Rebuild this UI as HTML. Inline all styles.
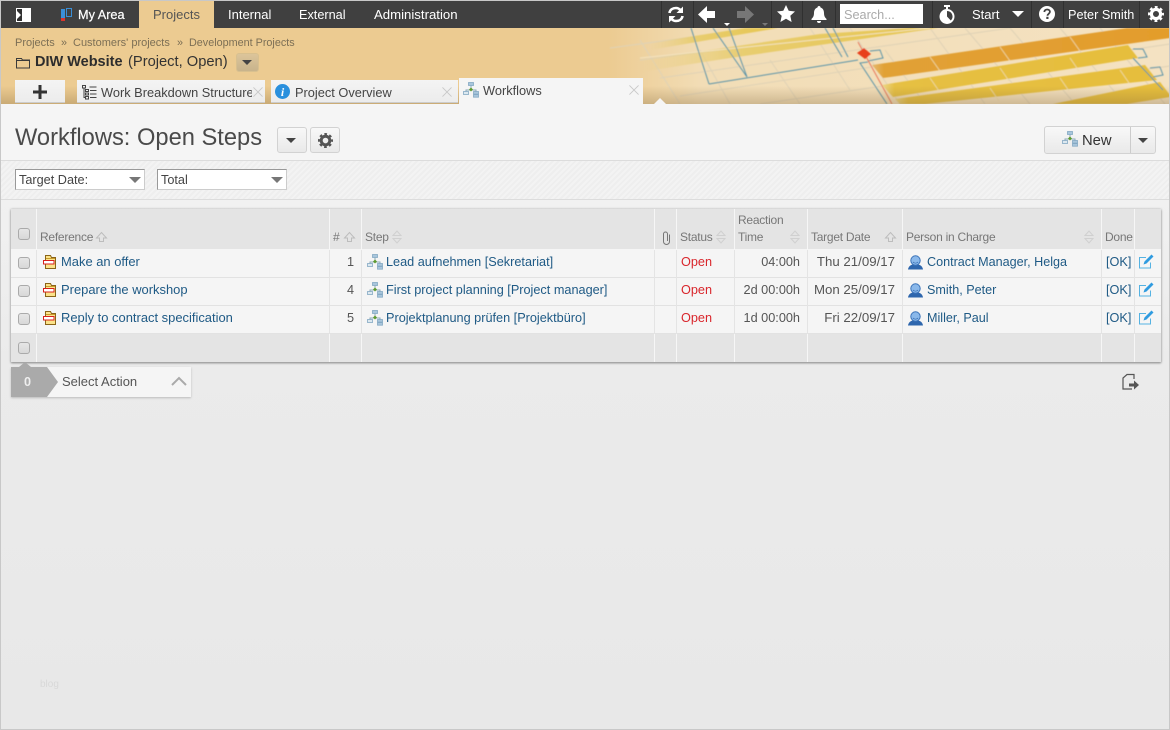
<!DOCTYPE html>
<html><head><meta charset="utf-8"><title>Workflows: Open Steps</title>
<style>
*{box-sizing:border-box}
html,body{margin:0;padding:0}
body{width:1170px;height:730px;position:relative;overflow:hidden;background:#e8e8e8;font-family:"Liberation Sans",sans-serif;font-size:12.7px;color:#555}
.a{position:absolute}
.t{position:absolute;white-space:nowrap;line-height:16px}
.nav{color:#fff;top:7px;font-size:13px}
.l{color:#1f5a85}
.rf{font-size:12.95px}.st{font-size:12.7px}.pc{font-size:12.6px}.dt{font-size:13.25px}
.r{text-align:right}
.h{color:#777;font-size:12px;letter-spacing:-.25px}
.bc{font-size:10.8px;color:#7c6f55;top:35px}
.sep{position:absolute;width:1px;top:1px;height:27px;background:#303030}
.cs{position:absolute;width:1px;top:209px;height:153px;background:linear-gradient(#f6f6f6 0 41px,#e4e4e4 41px 125px,#f6f6f6 125px 153px)}
.cb{position:absolute;left:18px;width:12px;height:12px;border:1px solid #aaa;border-radius:3px;background:linear-gradient(#e6e6e6,#d8d8d8)}
.rl{position:absolute;left:11px;width:1150px;height:1px;background:#e2e2e2}
.tab{position:absolute;top:80px;height:23px;background:linear-gradient(#f4f4f4,#ececec);border-bottom:1px solid #ccc}
.btn{position:absolute;border:1px solid #d2d2d2;border-radius:3px;background:linear-gradient(#f8f8f8,#e9e9e9)}
.sel{position:absolute;top:169px;height:21px;background:#fff;border:1px solid #ccc;border-top-color:#999;border-left-color:#999;color:#444;padding-left:3px;line-height:20px;font-size:12.7px}
.tri{position:absolute;width:0;height:0;border-left:6px solid transparent;border-right:6px solid transparent;border-top:6px solid #444}
svg.i{position:absolute;overflow:visible}
</style></head><body>

<svg width="0" height="0" style="position:absolute"><defs>
<symbol id="wf" viewBox="0 0 16 16" overflow="visible">
<path d="M8 3v4M3 10V8h10v2" fill="none" stroke="#8aa9b8" stroke-width="1"/>
<rect x="5.500" y=".5" width="5" height="3" fill="#a9c6dc" stroke="#84a9c4" stroke-width=".8"/>
<rect x=".5" y="9.500" width="5" height="3" fill="#dce8f0" stroke="#84a9c4" stroke-width=".8"/>
<rect x="10.500" y="9.500" width="5" height="2.600" fill="#a9c6dc" stroke="#84a9c4" stroke-width=".8"/>
<rect x="10.500" y="12.600" width="5" height="2.600" fill="#a9c6dc" stroke="#84a9c4" stroke-width=".8"/>
<path d="M8 5.500l2 2-2 2-2-2z" fill="#5d9a2e"/>
</symbol>
<symbol id="fd" viewBox="0 0 13 14" overflow="visible">
<path d="M2.500 .5h5l1 2h4v11h-10z" fill="#fbe38a" stroke="#8a6418" stroke-width="1"/>
<path d="M3 3.500h9" stroke="#c99a2a"/>
<rect x=".5" y="5.500" width="10.500" height="3.500" fill="#fff" stroke="#d8201c" stroke-width="1"/>
</symbol>
<symbol id="pr" viewBox="0 0 15 15" overflow="visible">
<path d="M0 14.500c.5-3.500 3-4.500 4.500-5h6c1.500.5 4 1.500 4.500 5z" fill="#2e66ad"/>
<circle cx="7.500" cy="5.500" r="4.700" fill="#8ab8ea" stroke="#3a72b8"/>
<path d="M5 7c1.500 1.500 3.500 1.500 5 0" stroke="#2e66ad" fill="none" stroke-width=".8"/>
</symbol>
<symbol id="ed" viewBox="0 0 15 15" overflow="visible">
<path d="M7 3.500H.5v10.500h11V8.500" fill="none" stroke="#55b2e2" stroke-width="1"/>
<path d="M4.500 10.500l1-3L12.500.5l2 2-7 7z" fill="#2f9be0"/>
</symbol>
<symbol id="gr" viewBox="0 0 16 16" overflow="visible">
<circle cx="8" cy="8" r="4.600" fill="none" stroke="currentColor" stroke-width="3.200"/>
<circle cx="8" cy="8" r="6.800" fill="none" stroke="currentColor" stroke-width="2.400" stroke-dasharray="2.800 2.540" stroke-dashoffset="1.400"/>
</symbol>
<symbol id="so" viewBox="0 0 11 10" overflow="visible"><path d="M.5 6L5.500 .5l5 5.500H7.500v3.500h-4V6z" fill="none" stroke="#bdbdbd"/></symbol>
<symbol id="sd" viewBox="0 0 10 14" overflow="visible"><path d="M1 5.500L5 1l4 4.500zM1 8.500L5 13l4-4.500z" fill="none" stroke="#d0d0d0"/></symbol>
<symbol id="xx" viewBox="0 0 11 11" overflow="visible"><path d="M.5 .5l10 10M10.500 .5l-10 10" stroke="#c8c8c8" fill="none"/></symbol>
</defs></svg>

<!-- Header art -->
<svg class="a" style="left:0;top:28px" width="1170" height="76" viewBox="0 28 1170 76">
<defs>
<linearGradient id="bg" x1="0" x2="1" y1="0" y2="0"><stop offset="0" stop-color="#eccb91"/><stop offset=".52" stop-color="#eccb91"/><stop offset=".6" stop-color="#f2ddb6"/><stop offset="1" stop-color="#f4e2c2"/></linearGradient>
<linearGradient id="y1" x1="0" x2="1" y1="0" y2="0"><stop offset="0" stop-color="#e8cd78" stop-opacity="0"/><stop offset=".35" stop-color="#e8cd70"/><stop offset="1" stop-color="#e6c64f"/></linearGradient>
<linearGradient id="o1" x1="0" x2="1" y1="0" y2="0"><stop offset="0" stop-color="#e5b870"/><stop offset=".04" stop-color="#e1a136"/><stop offset="1" stop-color="#e39d2c"/></linearGradient>
<linearGradient id="y2" x1="0" x2="1" y1="0" y2="0"><stop offset="0" stop-color="#ecd68a"/><stop offset=".05" stop-color="#e6c044"/><stop offset="1" stop-color="#e6be3c"/></linearGradient>
<linearGradient id="sh" x1="0" x2="0" y1="0" y2="1"><stop offset="0" stop-color="#7a5f35" stop-opacity="0"/><stop offset="1" stop-color="#7a5f35" stop-opacity=".3"/></linearGradient>
<filter id="bl" x="-5%" y="-5%" width="110%" height="110%"><feGaussianBlur stdDeviation=".55"/></filter>
</defs>
<rect x="0" y="28" width="1170" height="76" fill="url(#bg)"/>
<g filter="url(#bl)">
<g stroke="#dfd2b6" stroke-width="1" fill="none">
<path d="M640 60L900 28M660 78L1010 28M680 96L1130 28M760 104L1170 44M900 104L1170 66M610 48L760 28"/>
<path d="M850 28L900 104M885 50L925 104M930 28L985 104M965 28L1030 104M1010 28L1075 104M1060 28L1125 104M1100 28L1165 104M700 50L730 104M770 60L800 104M810 28L850 90M640 40L680 104"/>
</g>
<polygon points="650,43 745,28 778,28 650,50" fill="url(#y1)"/>
<polygon points="640,60 820,34 910,28 938,28 730,58 640,72" fill="url(#y1)"/>
<path d="M640 58L930 28" stroke="#f3e3c0"/>
<polygon points="872,65 1127,28 1170,28 1170,38 883,78" fill="url(#o1)"/>
<polygon points="882,85 1128,45 1138,58 893,97" fill="url(#y2)"/>
<polygon points="895,99 1145,65 1157,80 925,104 900,104" fill="url(#y2)"/>
<polygon points="1053,104 1160,82 1170,95 1170,97 1127,104" fill="#e6be3c"/>
<g stroke="#efdcab" stroke-width=".7" fill="none"><path d="M930 57l10 14M1000 47l10 14M1070 37l10 14M930 78l9 13M1000 68l9 13M1070 58l9 13M990 88l9 13M1060 78l9 13M1120 70l9 13"/></g>
<g stroke="#5a93a8" stroke-width="1" fill="none">
<path d="M691 28L709 84M713 28L747 77M729 28L747 77"/>
<path d="M709 84L858 60"/>
<path d="M825 28L842 57M833 28L848 57"/>
<path d="M870 51L880 50L883 58L868 61"/>
<path d="M868 62L860 63L887 104"/>
<path d="M1133 49L1143 49L1147 57L1138 58M1133 58L1163 90M1150 68L1160 67L1163 75L1153 77"/>
</g>
<path d="M858 42L892 104" stroke="#e8775a" stroke-width="1" fill="none"/>
<polygon points="857,53 864,48 871,54 865,59" fill="#e8401c"/>
</g>
<rect x="0" y="86" width="1170" height="18" fill="url(#sh)"/>
</svg>

<!-- Content bg -->
<div class="a" style="left:0;top:104px;width:1170px;height:57px;background:#f5f5f5"></div>
<div class="a" style="left:0;top:160px;width:1170px;height:40px;background:repeating-linear-gradient(135deg,#f3f3f3 0 2px,#eeeeee 2px 4px);border-top:1px solid #dcdcdc;border-bottom:1px solid #dcdcdc"></div>
<div class="a" style="left:0;top:200px;width:1170px;height:530px;background:linear-gradient(#f1f1f1,#ebebeb 30%,#e8e8e8)"></div>

<!-- Top nav -->
<div class="a" style="left:0;top:1px;width:1170px;height:27px;background:#404040"></div>
<div class="a" style="left:139px;top:1px;width:75px;height:27px;background:#eccb91"></div>
<div class="a" style="left:16px;top:8px;width:15px;height:14px;background:#fff;border:1px solid #fff"></div>
<div class="a" style="left:17px;top:9px;width:5px;height:12px;background:#303030"></div>
<div class="a" style="left:17px;top:11px;width:0;height:0;border-left:4px solid #fff;border-top:4px solid transparent;border-bottom:4px solid transparent"></div>
<div class="a" style="left:61px;top:9px;width:4px;height:10px;background:#3a8fd8"></div>
<div class="a" style="left:61px;top:18px;width:4px;height:3px;background:#d8352c"></div>
<div class="a" style="left:66px;top:8px;width:6px;height:9px;border:1px solid #3a8fd8"></div>
<div class="t nav" style="left:78px;font-size:12.700px;-webkit-text-stroke:.2px #fff">My Area</div>
<div class="t nav" style="left:153px;color:#555">Projects</div>
<div class="t nav" style="left:228px">Internal</div>
<div class="t nav" style="left:299px;font-size:12.700px">External</div>
<div class="t nav" style="left:374px;font-size:13.200px">Administration</div>

<div class="sep" style="left:661px"></div><div class="sep" style="left:693px"></div><div class="sep" style="left:771px"></div><div class="sep" style="left:802px"></div><div class="sep" style="left:835px"></div><div class="sep" style="left:932px"></div><div class="sep" style="left:1031px"></div><div class="sep" style="left:1063px"></div><div class="sep" style="left:1139px"></div>

<svg class="i" style="left:668px;top:6px" width="16" height="17" viewBox="0 0 16 17"><path d="M1.500 7C2 3.500 5 2 8 2c2 0 3.500 1 4.500 2" fill="none" stroke="#fff" stroke-width="2.600"/><path d="M15 .5v6.500h-6.500z" fill="#fff"/><path d="M14.500 10C14 13.500 11 15 8 15c-2 0-3.500-1-4.500-2" fill="none" stroke="#fff" stroke-width="2.600"/><path d="M1 16.500v-6.500h6.500z" fill="#fff"/></svg>
<svg class="i" style="left:698px;top:6px" width="18" height="17" viewBox="0 0 18 17"><path d="M0 8.500L9 0v5h8v7H9v5z" fill="#fff"/></svg>
<div class="a" style="left:724px;top:23px;width:0;height:0;border-left:3px solid transparent;border-right:3px solid transparent;border-top:3px solid #fff"></div>
<svg class="i" style="left:736px;top:6px" width="18" height="17" viewBox="0 0 18 17"><path d="M18 8.500L9 0v5H1v7h8v5z" fill="#777"/></svg>
<div class="a" style="left:762px;top:23px;width:0;height:0;border-left:3px solid transparent;border-right:3px solid transparent;border-top:3px solid #777"></div>
<svg class="i" style="left:777px;top:5px" width="18" height="17" viewBox="0 0 18 17"><path d="M9 0l2.700 5.800 6.300.7-4.700 4.200 1.300 6.300L9 13.800 3.400 17l1.300-6.300L0 6.500l6.300-.7z" fill="#fff"/></svg>
<svg class="i" style="left:811px;top:6px" width="16" height="17" viewBox="0 0 16 17"><path d="M8 0c1 0 1.500.7 1.500 1.500C12 2.300 13 4.500 13 7c0 3 1 4.500 2.500 6v1H.5v-1C2 11.500 3 10 3 7c0-2.500 1-4.700 3.500-5.500C6.500.7 7 0 8 0z" fill="#fff"/><path d="M6 15h4a2 2 0 0 1-4 0z" fill="#fff"/></svg>
<div class="a" style="left:840px;top:4px;width:83px;height:20px;background:#fff"></div>
<div class="t" style="left:844px;top:7px;color:#aaa;font-size:12.700px">Search...</div>
<svg class="i" style="left:939px;top:5px" width="16" height="20" viewBox="0 0 16 20"><rect x="5" y="0" width="6" height="2" fill="#fff"/><rect x="7" y="1" width="2" height="3" fill="#fff"/><circle cx="8" cy="11.500" r="7.500" fill="#fff"/><path d="M8 11.500V6a5.500 5.500 0 0 1 3.800 9.500z" fill="#404040"/></svg>
<div class="t nav" style="left:972px">Start</div>
<div class="tri" style="left:1012px;top:11px;border-top-color:#fff"></div>
<svg class="i" style="left:1039px;top:6px" width="16" height="16" viewBox="0 0 16 16"><circle cx="8" cy="8" r="8" fill="#fff"/><path d="M5.300 6C5.500 4.300 6.700 3.500 8.200 3.500c1.600 0 2.700 1 2.700 2.300 0 2-2.400 2-2.400 3.900" fill="none" stroke="#404040" stroke-width="1.800"/><rect x="7.300" y="10.800" width="2.200" height="2.200" fill="#404040"/></svg>
<div class="t nav" style="left:1068px;font-size:12.700px">Peter Smith</div>
<svg class="i" style="left:1148px;top:6px;color:#fff" width="16" height="16"><use href="#gr"/></svg>

<!-- Breadcrumb -->
<div class="t bc" style="left:15px;font-size:11px">Projects</div>
<div class="t bc" style="left:61px">»</div>
<div class="t bc" style="left:73px;font-size:11px">Customers' projects</div>
<div class="t bc" style="left:177px">»</div>
<div class="t bc" style="left:189px">Development Projects</div>
<svg class="i" style="left:16px;top:57px" width="14" height="12" viewBox="0 0 14 12"><path d="M.5 1.500h5l1 1.500h7v8H.5z" fill="none" stroke="#3a3a3a"/><path d="M.5 3.500h13" stroke="#3a3a3a"/></svg>
<div class="t" style="left:35px;top:54px;font-size:14.500px;font-weight:700;color:#2d2d2d">DIW Website</div>
<div class="t" style="left:128px;top:54px;font-size:14.700px;color:#333">(Project, Open)</div>
<div class="btn" style="left:236px;top:53px;width:23px;height:19px;background:linear-gradient(#dcc59a,#c8b48c);border-color:#d8c08f"></div>
<div class="tri" style="left:242px;top:60px;border-left-width:5.500px;border-right-width:5.500px;border-top-width:5.500px"></div>

<!-- Tabs -->
<div class="tab" style="left:15px;width:50px"></div>
<svg class="i" style="left:33px;top:85px" width="14" height="14"><path d="M7 0v14M0 7h14" stroke="#333" stroke-width="3"/></svg>
<div class="tab" style="left:77px;width:188px"></div>
<svg class="i" style="left:82px;top:85px" width="15" height="15" viewBox="0 0 15 15"><g stroke="#444" fill="none"><rect x=".5" y=".5" width="3" height="2.500"/><rect x="3.500" y="4.500" width="3" height="2"/><rect x="3.500" y="8" width="3" height="2"/><rect x="3.500" y="11.500" width="3" height="2.500"/><path d="M2 3v9.500h1.500M7.500 2h7M8 5.500h6.500M8 9h6.500M8 12.500h6.500"/></g></svg>
<div class="t" style="left:101px;top:85px;color:#444;width:151px;overflow:hidden;font-size:12.800px">Work Breakdown Structure</div>
<svg class="i" style="left:253px;top:87px" width="10" height="10" viewBox="0 0 11 11"><use href="#xx" width="11" height="11"/></svg>
<div class="tab" style="left:271px;width:187px"></div>
<svg class="i" style="left:275px;top:84px" width="15" height="15" viewBox="0 0 15 15"><circle cx="7.500" cy="7.500" r="7.500" fill="#2a90dd"/><text x="7.500" y="12" text-anchor="middle" font-family="Liberation Serif" font-style="italic" font-weight="700" font-size="12" fill="#fff">i</text></svg>
<div class="t" style="left:295px;top:85px;color:#444;font-size:12.800px">Project Overview</div>
<svg class="i" style="left:442px;top:87px" width="10" height="10" viewBox="0 0 11 11"><use href="#xx" width="11" height="11"/></svg>
<div class="a" style="left:459px;top:78px;width:184px;height:26px;background:#f5f5f5"></div>
<svg class="i" style="left:463px;top:82px" width="16" height="16"><use href="#wf"/></svg>
<div class="t" style="left:483px;top:83px;color:#444;font-size:12.800px">Workflows</div>
<svg class="i" style="left:629px;top:85px" width="10" height="10" viewBox="0 0 11 11"><use href="#xx" width="11" height="11"/></svg>
<div class="a" style="left:654px;top:98px;width:0;height:0;border-left:6px solid transparent;border-right:6px solid transparent;border-bottom:6px solid #f5f5f5"></div>

<!-- Title -->
<div class="t" style="left:15px;top:124px;font-size:23.700px;line-height:28px;color:#4a4a4a">Workflows: Open Steps</div>
<div class="btn" style="left:277px;top:127px;width:30px;height:26px"></div>
<div class="tri" style="left:286px;top:138px;border-left-width:5.500px;border-right-width:5.500px;border-top-width:5.500px"></div>
<div class="btn" style="left:310px;top:127px;width:30px;height:26px"></div>
<svg class="i" style="left:318px;top:133px;color:#555" width="15" height="15" viewBox="0 0 16 16"><use href="#gr" width="16" height="16"/></svg>
<div class="btn" style="left:1044px;top:126px;width:112px;height:28px"></div>
<div class="a" style="left:1130px;top:127px;width:1px;height:26px;background:#ccc"></div>
<svg class="i" style="left:1062px;top:131px" width="16" height="16"><use href="#wf"/></svg>
<div class="t" style="left:1082px;top:133px;font-size:14.800px;color:#333">New</div>
<div class="tri" style="left:1138px;top:138px;border-left-width:5.500px;border-right-width:5.500px;border-top-width:5.500px"></div>

<!-- Filters -->
<div class="sel" style="left:15px;width:130px">Target Date:</div>
<div class="tri" style="left:129px;top:177px;border-top-color:#777"></div>
<div class="sel" style="left:157px;width:130px">Total</div>
<div class="tri" style="left:271px;top:177px;border-top-color:#777"></div>

<!-- Table -->
<div class="a" style="left:11px;top:209px;width:1150px;height:153px;background:#f5f5f5;box-shadow:0 0 2px #bbb,0 1px 2px #777"></div>
<div class="a" style="left:11px;top:209px;width:1150px;height:40px;background:#e4e4e4"></div>
<div class="a" style="left:11px;top:334px;width:1150px;height:28px;background:#e4e4e4"></div>
<div class="rl" style="top:277px"></div><div class="rl" style="top:305px"></div><div class="rl" style="top:333px"></div>
<div class="cs" style="left:36px"></div><div class="cs" style="left:329px"></div><div class="cs" style="left:361px"></div><div class="cs" style="left:654px"></div><div class="cs" style="left:676px"></div><div class="cs" style="left:734px"></div><div class="cs" style="left:807px"></div><div class="cs" style="left:902px"></div><div class="cs" style="left:1101px"></div><div class="cs" style="left:1134px"></div>

<div class="cb" style="top:228px"></div><div class="cb" style="top:257px"></div><div class="cb" style="top:285px"></div><div class="cb" style="top:313px"></div><div class="cb" style="top:342px"></div>

<div class="t h" style="left:40px;top:229px">Reference</div>
<svg class="i" style="left:96px;top:232px" width="11" height="10"><use href="#so"/></svg>
<div class="t h" style="left:333px;top:229px">#</div>
<svg class="i" style="left:344px;top:232px" width="11" height="10"><use href="#so"/></svg>
<div class="t h" style="left:365px;top:229px">Step</div>
<svg class="i" style="left:392px;top:230px" width="10" height="14"><use href="#sd"/></svg>
<svg class="i" style="left:662px;top:231px" width="9" height="14" viewBox="0 0 9 14"><path d="M7.500 3.500v7a3 3 0 0 1-6 0V3a2 2 0 0 1 4 0v7" fill="none" stroke="#777"/></svg>
<div class="t h" style="left:680px;top:229px">Status</div>
<svg class="i" style="left:716px;top:230px" width="10" height="14"><use href="#sd"/></svg>
<div class="t h" style="left:738px;top:212px">Reaction</div>
<div class="t h" style="left:738px;top:229px">Time</div>
<svg class="i" style="left:790px;top:230px" width="10" height="14"><use href="#sd"/></svg>
<div class="t h" style="left:811px;top:229px">Target Date</div>
<svg class="i" style="left:885px;top:232px" width="11" height="10"><use href="#so"/></svg>
<div class="t h" style="left:906px;top:229px">Person in Charge</div>
<svg class="i" style="left:1084px;top:230px" width="10" height="14"><use href="#sd"/></svg>
<div class="t h" style="left:1105px;top:229px">Done</div>

<!-- Row 1 -->
<svg class="i" style="left:43px;top:255px" width="13" height="14"><use href="#fd"/></svg>
<div class="t l rf" style="left:61px;top:254px">Make an offer</div>
<div class="t r" style="left:330px;width:24px;top:254px">1</div>
<svg class="i" style="left:367px;top:254px" width="16" height="16"><use href="#wf"/></svg>
<div class="t l st" style="left:386px;top:254px">Lead aufnehmen [Sekretariat]</div>
<div class="t" style="left:681px;top:254px;color:#d9262c">Open</div>
<div class="t r" style="left:735px;width:65px;top:254px">04:00h</div>
<div class="t r dt" style="left:798px;width:97px;top:254px">Thu 21/09/17</div>
<svg class="i" style="left:908px;top:255px" width="15" height="15"><use href="#pr"/></svg>
<div class="t l pc" style="left:927px;top:254px">Contract Manager, Helga</div>
<div class="t l" style="left:1106px;top:254px">[OK]</div>
<svg class="i" style="left:1139px;top:254px" width="15" height="15"><use href="#ed"/></svg>

<!-- Row 2 -->
<svg class="i" style="left:43px;top:283px" width="13" height="14"><use href="#fd"/></svg>
<div class="t l rf" style="left:61px;top:282px">Prepare the workshop</div>
<div class="t r" style="left:330px;width:24px;top:282px">4</div>
<svg class="i" style="left:367px;top:282px" width="16" height="16"><use href="#wf"/></svg>
<div class="t l st" style="left:386px;top:282px">First project planning [Project manager]</div>
<div class="t" style="left:681px;top:282px;color:#d9262c">Open</div>
<div class="t r" style="left:735px;width:65px;top:282px">2d 00:00h</div>
<div class="t r dt" style="left:798px;width:97px;top:282px">Mon 25/09/17</div>
<svg class="i" style="left:908px;top:283px" width="15" height="15"><use href="#pr"/></svg>
<div class="t l pc" style="left:927px;top:282px">Smith, Peter</div>
<div class="t l" style="left:1106px;top:282px">[OK]</div>
<svg class="i" style="left:1139px;top:282px" width="15" height="15"><use href="#ed"/></svg>

<!-- Row 3 -->
<svg class="i" style="left:43px;top:311px" width="13" height="14"><use href="#fd"/></svg>
<div class="t l rf" style="left:61px;top:310px">Reply to contract specification</div>
<div class="t r" style="left:330px;width:24px;top:310px">5</div>
<svg class="i" style="left:367px;top:310px" width="16" height="16"><use href="#wf"/></svg>
<div class="t l st" style="left:386px;top:310px">Projektplanung prüfen [Projektbüro]</div>
<div class="t" style="left:681px;top:310px;color:#d9262c">Open</div>
<div class="t r" style="left:735px;width:65px;top:310px">1d 00:00h</div>
<div class="t r dt" style="left:798px;width:97px;top:310px">Fri 22/09/17</div>
<svg class="i" style="left:908px;top:311px" width="15" height="15"><use href="#pr"/></svg>
<div class="t l pc" style="left:927px;top:310px">Miller, Paul</div>
<div class="t l" style="left:1106px;top:310px">[OK]</div>
<svg class="i" style="left:1139px;top:310px" width="15" height="15"><use href="#ed"/></svg>

<!-- Action -->
<div class="a" style="left:11px;top:367px;width:180px;height:30px;background:#f5f5f5;box-shadow:0 1px 2px #bbb"></div>
<svg class="i" style="left:11px;top:361px" width="47" height="36" viewBox="0 0 47 36"><path d="M0 6h8l6-5 6 5h16l11 15-11 15H0z" fill="#aaa"/></svg>
<div class="t" style="left:24px;top:374px;color:#eee;font-weight:700">0</div>
<div class="t" style="left:62px;top:374px;color:#555;font-size:13px">Select Action</div>
<svg class="i" style="left:171px;top:376px" width="16" height="10"><path d="M1 9l7-7 7 7" fill="none" stroke="#aaa" stroke-width="2"/></svg>
<svg class="i" style="left:1122px;top:374px" width="18" height="16" viewBox="0 0 18 16"><path d="M10 15H1V4l4-3.500h7V5" fill="none" stroke="#555" stroke-width="1.200"/><path d="M7 9.500h5V6.500l5 4.500-5 4.500v-3H7z" fill="#555"/></svg>

<div class="t" style="left:40px;top:677px;font-size:10px;color:#d8d8d8">blog</div>

<!-- Page border -->
<div class="a" style="left:0;top:0;width:1170px;height:730px;border:1px solid #c8c8c8;pointer-events:none"></div>
</body></html>
